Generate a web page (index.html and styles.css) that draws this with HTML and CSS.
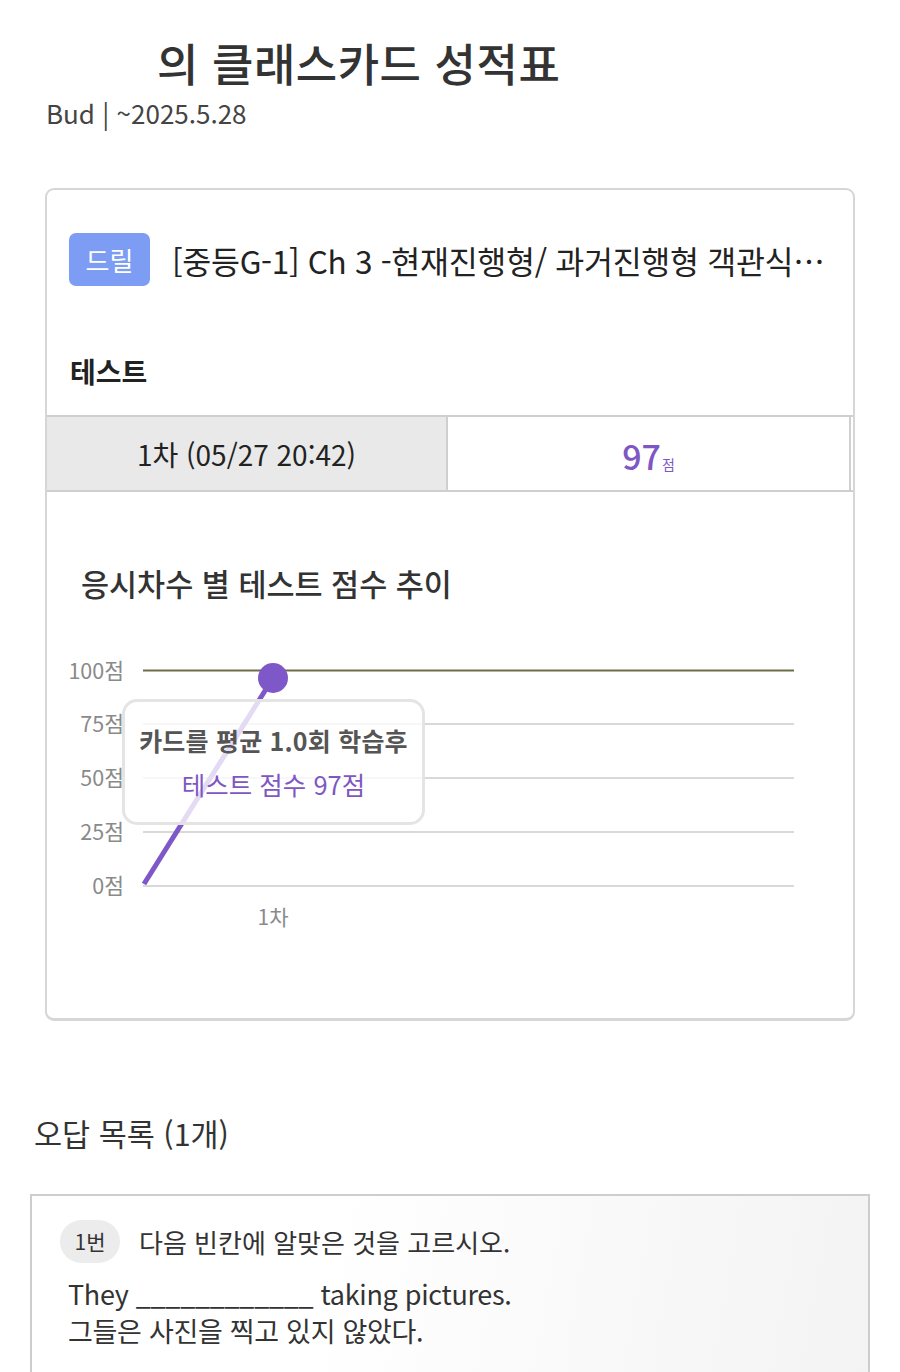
FILE: index.html
```html
<!DOCTYPE html>
<html lang="ko">
<head>
<meta charset="utf-8">
<title>클래스카드 성적표</title>
<link rel="stylesheet" href="styles.css">
</head>
<body>
<header class="page-head">
  <h1 class="page-title">의 클래스카드 성적표</h1>
  <div class="page-sub">Bud | ~2025.5.28</div>
</header>

<section class="card">
  <div class="card-head">
    <span class="badge">드릴</span>
    <span class="set-title">[중등G-1] Ch 3 -현재진행형/ 과거진행형 객관식…</span>
  </div>
  <div class="section-label">테스트</div>
  <div class="score-row">
    <div class="cell cell-date">1차 (05/27 20:42)</div>
    <div class="cell cell-score"><span class="num">97</span><span class="unit">점</span></div>
  </div>
  <div class="chart-block">
    <div class="chart-title">응시차수 별 테스트 점수 추이</div>
    <div class="chart">
      <svg class="chart-svg" width="806" height="330" viewBox="0 0 806 330">
        <g class="grid">
          <line x1="96" y1="83" x2="747" y2="83"/>
          <line x1="96" y1="137" x2="747" y2="137"/>
          <line x1="96" y1="191" x2="747" y2="191"/>
          <line x1="96" y1="245" x2="747" y2="245"/>
        </g>
        <line x1="96" y1="29.5" x2="747" y2="29.5" stroke="#6e6e48" stroke-width="2"/>
        <g class="ylabels">
          <text x="77" y="38">100점</text>
          <text x="77" y="91">75점</text>
          <text x="77" y="145">50점</text>
          <text x="77" y="199">25점</text>
          <text x="77" y="253">0점</text>
        </g>
        <line x1="97" y1="243" x2="226" y2="37" stroke="#7e57c8" stroke-width="5"/>
        <circle cx="226" cy="37" r="15" fill="#7e57c8"/>
        <text class="xlabel" x="226" y="284">1차</text>
      </svg>
      <div class="tooltip">
        <div class="tip-main">카드를 평균 1.0회 학습후</div>
        <div class="tip-sub">테스트 점수 97점</div>
      </div>
    </div>
  </div>
</section>

<h2 class="wrong-title">오답 목록 (1개)</h2>
<section class="wrong-box">
  <div class="q-head">
    <span class="q-no">1번</span>
    <span class="q-text">다음 빈칸에 알맞은 것을 고르시오.</span>
  </div>
  <div class="q-body">
    <div>They ____________ taking pictures.</div>
    <div>그들은 사진을 찍고 있지 않았다.</div>
  </div>
</section>
</body>
</html>
```

FILE: styles.css
```css
* { box-sizing: border-box; }
html, body { margin: 0; padding: 0; background: #fff; }
body {
  font-family: "Noto Sans CJK KR", "Noto Sans", sans-serif;
  color: #333;
  width: 900px;
  overflow: hidden;
}
.page-head { padding: 33px 0 0 0; }
.page-title {
  margin: 0 0 0 157px;
  font-size: 45px;
  font-weight: 500;
  line-height: 60px;
  color: #333;
  letter-spacing: 0.5px;
}
.page-sub {
  margin: 3px 0 0 46px;
  font-size: 26px;
  line-height: 34px;
  color: #444;
}

.card {
  margin: 58px 0 0 45px;
  width: 810px;
  border: 2px solid #d6d6d6;
  border-bottom-width: 3px;
  border-radius: 9px;
  background: #fff;
  overflow: hidden;
}
.card-head {
  display: flex;
  align-items: center;
  gap: 22px;
  padding: 43px 10px 0 22px;
}
.badge {
  flex: none;
  width: 81px;
  height: 53px;
  border-radius: 7px;
  background: #7d9cf4;
  color: #fff;
  font-size: 26px;
  line-height: 53px;
  text-align: center;
}
.set-title {
  font-size: 31.5px;
  line-height: 40px;
  color: #222;
  white-space: nowrap;
  letter-spacing: -0.3px;
}
.section-label {
  margin-top: 65px;
  padding-left: 23px;
  font-size: 28px;
  font-weight: 700;
  line-height: 40px;
  color: #222;
}
.score-row {
  margin-top: 24px;
  display: flex;
  border-top: 2px solid #cfcfcf;
  border-bottom: 2px solid #cfcfcf;
  height: 77px;
}
.cell {
  display: flex;
  align-items: center;
  justify-content: center;
  width: 401px;
}
.cell-date {
  background: #e9e9e9;
  border-right: 2px solid #cfcfcf;
  font-size: 28px;
  color: #222;
}
.cell-score {
  border-right: 2px solid #cfcfcf;
  width: 403px;
  color: #7e57c2;
  align-items: baseline;
  padding-top: 14px;
}
.cell-score .num { font-size: 34px; font-weight: 500; }
.cell-score .unit { font-size: 14px; margin-left: 1px; }

.chart-block { padding: 70px 0 47px 0; }
.chart-title {
  padding-left: 34px;
  font-size: 30.5px;
  font-weight: 500;
  line-height: 42px;
  color: #333;
}
.chart {
  position: relative;
  margin-top: 37px;
  height: 330px;
}
.chart-svg { display: block; }
.grid line { stroke: #cdcdcd; stroke-width: 1.5; }
.ylabels text {
  font-family: "Noto Sans CJK KR", sans-serif;
  font-size: 21.5px;
  fill: #8a8a8a;
  text-anchor: end;
}
.xlabel {
  font-family: "Noto Sans CJK KR", sans-serif;
  font-size: 21px;
  fill: #8a8a8a;
  text-anchor: middle;
}
.tooltip {
  position: absolute;
  left: 75px;
  top: 58px;
  width: 303px;
  height: 126px;
  border: 3px solid rgba(225, 225, 225, 0.9);
  border-radius: 15px;
  background: rgba(255, 255, 255, 0.78);
  display: flex;
  flex-direction: column;
  align-items: center;
  justify-content: center;
  gap: 10px;
}
.tip-main {
  font-size: 25px;
  font-weight: 700;
  color: #555;
  line-height: 34px;
  letter-spacing: 0.2px;
}
.tip-sub {
  font-size: 25.5px;
  color: #7e57c2;
  line-height: 34px;
}

.wrong-title {
  margin: 91px 0 0 34px;
  font-size: 30.5px;
  font-weight: 400;
  line-height: 42px;
  color: #333;
}
.wrong-box {
  margin: 40px 0 0 30px;
  width: 840px;
  height: 220px;
  border: 2px solid #cdcdcd;
  border-bottom: none;
  background: linear-gradient(100deg, #ffffff 35%, #f3f3f3 100%);
  padding: 24px 0 0 28px;
}
.q-head {
  display: flex;
  align-items: center;
  gap: 19px;
}
.q-no {
  width: 60px;
  height: 43px;
  border-radius: 22px;
  background: #ececec;
  font-size: 21px;
  line-height: 43px;
  text-align: center;
  color: #333;
}
.q-text {
  font-size: 26px;
  color: #333;
  line-height: 40px;
}
.q-body {
  margin-top: 12px;
  padding-left: 8px;
  font-size: 27px;
  line-height: 37px;
  color: #333;
  letter-spacing: -0.3px;
}
```
